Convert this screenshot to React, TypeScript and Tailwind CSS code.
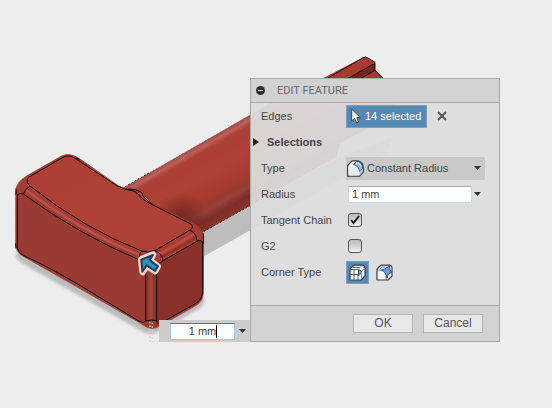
import type { ReactNode } from "react";

function Model() {
  return (
    <svg
      className="absolute left-0 top-0 h-[408px] w-[552px]"
      viewBox="0 0 1656 1224"
      aria-hidden="true"
    >
      <defs>
        <linearGradient id="handle" gradientUnits="userSpaceOnUse" x1="560" y1="454" x2="678" y2="660">
          <stop offset="0" stopColor="#9c4b43" />
          <stop offset="0.05" stopColor="#bd6158" />
          <stop offset="0.11" stopColor="#ab4036" />
          <stop offset="0.4" stopColor="#b04035" />
          <stop offset="0.6" stopColor="#a83a30" />
          <stop offset="0.72" stopColor="#9c3a32" />
          <stop offset="0.78" stopColor="#97413a" />
          <stop offset="0.88" stopColor="#7c2d27" />
          <stop offset="1" stopColor="#8d322a" />
        </linearGradient>
        <linearGradient id="top" x1="0" y1="0" x2="1" y2="1">
          <stop offset="0" stopColor="#ac3f35" />
          <stop offset="1" stopColor="#b04136" />
        </linearGradient>
        <linearGradient id="edge" x1="0" y1="0" x2="1" y2="0">
          <stop offset="0" stopColor="#85302a" />
          <stop offset="0.45" stopColor="#a5443b" />
          <stop offset="1" stopColor="#7d2c26" />
        </linearGradient>
        <radialGradient id="joint" gradientUnits="userSpaceOnUse" cx="545" cy="655" r="80">
          <stop offset="0" stopColor="#5e1f1a" stopOpacity="0.7" />
          <stop offset="1" stopColor="#5e1f1a" stopOpacity="0" />
        </radialGradient>
        <filter id="soft">
          <feGaussianBlur stdDeviation="5" />
        </filter>
      </defs>

      <path d="M608 696 L1000 480 L1180 410 L1160 460 L612 769 Z" fill="#bdbdbd" />
      <path
        d="M45 765 Q50 782 80 798 L430 996 Q455 1008 482 992 L600 925 Q614 912 614 895 L450 900 L80 740 Z"
        fill="#bcbcbc"
        filter="url(#soft)"
      />

      <path d="M920 260 L1080 177 Q1095 167 1102 174 L1125 187 L1125 211 L1150 235 L1190 340 L1000 440 Z" fill="#a83a30" />
      <path d="M1040 235 L1125 188 L1125 211 L1080 235 Z" fill="#74271f" />
      <path
        d="M985 233 L1088 174 Q1097 168 1104 174 L1125 187 L1125 211 L1150 235 M1045 235 L1125 190 M1083 235 L1125 211"
        fill="none" stroke="#171010" strokeWidth="3"
      />
      <path d="M370 563 L915 250 Q1060 300 1010 470 L610 696 L450 700 Z" fill="url(#handle)" />
      <path d="M370 563 L750 346 L750 617 L610 696 L450 700 Z" fill="url(#joint)" />
      <path d="M375 560 L450 517 M612 694 L750 617" fill="none" stroke="#241311" strokeWidth="3" strokeDasharray="5 6" />
      <path d="M450 517 L750 346" fill="none" stroke="#7d5a56" strokeWidth="2" strokeDasharray="4 6" />

      <g transform="translate(0 420)" strokeLinejoin="round">
        <path
          d="M47 155 Q48 126 80 108 L183 49 Q207 35 237 55 L355 137 Q370 146 400 147 Q424 151 455 190 L580 250 Q611 265 611 292 L610 460 Q609 483 590 495 L480 558 Q452 576 422 550 L72 350 Q47 337 47 315 Z"
          fill="#a63c33" stroke="#8a3a32" strokeWidth="2"
        />
        <path
          d="M85 112 L187 53 Q205 42 226 55 L350 137 Q372 149 405 154 Q430 180 445 188 L572 252 Q584 261 570 270 L465 332 Q445 338 425 333 Q250 265 90 138 Q76 126 85 112 Z"
          fill="url(#top)"
        />
        <path d="M79 151 Q250 277 421 346" fill="none" stroke="#bc5248" strokeWidth="7" />
        <path d="M74 157 Q250 292 421 353" fill="none" stroke="#963a32" strokeWidth="3" />
        <path d="M474 345 L584 282" stroke="#bb4a3e" strokeWidth="8" />
        <path d="M480 354 L590 292" stroke="#8b3029" strokeWidth="5" />
        <path
          d="M52 165 Q58 157 70 162 Q235 283 425 363 Q437 369 437 382 L437 543 Q431 551 420 545 L300 473 Q180 397 72 347 Q52 338 52 318 Z"
          fill="#993b34"
        />
        <path
          d="M470 382 Q472 370 489 362 L594 302 Q608 299 608 312 L608 460 Q605 480 590 489 L479 551 Q470 552 470 543 Z"
          fill="#883029"
        />
        <path d="M438 370 L470 370 L470 543 L438 543 Z" fill="url(#edge)" />
        <path d="M426 550 Q452 537 477 554 Q452 574 426 550 Z" fill="#a1352c" />
        <path d="M418 157 Q436 178 455 190" fill="none" stroke="#a8635c" strokeWidth="5" />
        <g fill="none" stroke="#0f0909" strokeWidth="3">
          <path d="M85 112 L187 53 Q205 42 226 55 L350 137 Q372 149 405 154 Q430 180 445 188 L572 252 Q584 261 570 270 L465 332 Q445 338 425 333 Q250 265 90 138 Q76 126 85 112 Z" />
          <path d="M52 165 Q58 157 70 162 Q235 283 425 363 Q437 369 437 382 L437 543 Q431 551 420 545 L300 473 Q180 397 72 347 Q52 338 52 318 Z" />
          <path d="M470 382 Q472 370 489 362 L594 302 Q608 299 608 312 L608 460 Q605 480 590 489 L479 551 Q470 552 470 543 Z" />
          <path d="M70 162 Q74 148 90 138 M425 333 Q414 345 423 362 M465 332 Q487 340 489 362 M570 270 Q588 279 591 302 M438 543 Q454 537 470 543 M48 145 L48 165 M47 310 L48 325 M610 280 L610 312 M228 54 L238 58 M385 147 Q408 146 424 157 Q433 180 457 191" />
        </g>
        <path
          d="M428 396 L424 358 L459 344 L449 361 L473 379 L465 393 L440 376 Z"
          fill="#f0d4d1" stroke="#f0d4d1" strokeWidth="20"
        />
        <path
          d="M427 395 L424 359 L459 345 L449 360 L474 379 L465 393 L440 376 Z"
          fill="#2b8dbf" stroke="#26404f" strokeWidth="6"
        />
        <path d="M431 383 L429 363 L449 354 L441 363 L467 382 L464 386 L438 367 Z" fill="#2f93c5" />
        <path d="M450 545 L450 606 M457 548 L457 606" stroke="#d8cfce" strokeWidth="4" strokeDasharray="5 6" />
      </g>
    </svg>
  );
}

function Caret({ className = "" }: { className?: string }) {
  return (
    <svg className={`h-1 w-[7px] ${className}`} viewBox="0 0 7 4" aria-hidden="true">
      <path d="M0 0h7L3.500 4z" fill="#333" />
    </svg>
  );
}

function FilletIcon() {
  return (
    <svg className="pointer-events-none absolute left-px top-[3px] size-[17px]" viewBox="0 0 17 17" aria-hidden="true">
      <path d="M.7 5.500 5 .8H10.500Q16.300 2 16.300 8V12L12.500 16.200H.7Z" fill="#f7f9fb" stroke="#34373b" strokeWidth="1.200" strokeLinejoin="round" />
      <path d="M6.500 4.600 9.500 1.400Q15.500 2.500 15.700 8.500L12.500 11.500Q12 6 6.500 4.600Z" fill="#8fb6e4" stroke="#2c4c7c" strokeWidth=".9" />
      <path d="M9 4.200 11 2.600Q13.500 4 14 6.500" fill="none" stroke="#d3e5f8" strokeWidth="1.200" />
      <path d="M12.600 11.500V15.800L15.700 12V9Z" fill="#b7c6d8" />
      <path d="M1.500 6.200 6 5Q11.500 6.500 11.800 11.500V15.400H1.500Z" fill="#e6ebf2" />
    </svg>
  );
}

function CornerIcon({ setback = false }: { setback?: boolean }) {
  return (
    <svg className="size-[17px]" viewBox="0 0 17 17" aria-hidden="true">
      <path
        d="M1 6Q1 4.500 2.500 3.500L5 1.200H13Q16 1.200 16 4.500V12L12 16H1Z"
        fill="#f4f5f6" stroke="#3c4046" strokeWidth="1.200" strokeLinejoin="round"
      />
      {setback ? (
        <>
          <path d="M1.500 6H6M10 12V16M4 4.500 6.500 3H9" fill="none" stroke="#656b72" />
          <path
            d="M5.500 6Q9.500 5.500 13.500 1.500 13 5.500 15.500 8.500 12 9 11 14 9.500 7.500 5.500 6Z"
            fill="#7199d2" stroke="#244c8d" strokeLinejoin="round"
          />
        </>
      ) : (
        <>
          <path d="M1.500 5.500H9M9 11V16M5 5.500V15.500M1.500 10.500H9M4 3.500H11" fill="none" stroke="#5c6269" />
          <path d="M9 5.500 12.500 2 15.500 4.500 12.500 7.500Z" fill="#fff" stroke="#7b858f" strokeWidth=".8" />
          <path d="M9.500 5.500Q12 6 12.500 9L9.500 11.500Z" fill="#7fa5dc" stroke="#244c8d" />
          <path d="M12.500 8V15" stroke="#8b9299" />
        </>
      )}
    </svg>
  );
}

function Row({ label, htmlFor, children }: { label: string; htmlFor: string; children: ReactNode }) {
  return (
    <div className="flex h-[26px] items-center pl-[10px] pr-[14px]">
      <label htmlFor={htmlFor} className="w-[85px] shrink-0">{label}</label>
      {children}
    </div>
  );
}

function Check({ id, checked = false }: { id: string; checked?: boolean }) {
  return (
    <span className="relative ml-[2px] size-[14px]">
      <input
        id={id}
        type="checkbox"
        defaultChecked={checked}
        className="peer block size-[14px] appearance-none rounded-[3px] border border-[#55585a] bg-linear-to-b from-[#b8b8b8] to-[#f0f0f0]"
      />
      <svg className="pointer-events-none absolute inset-0 hidden size-[14px] peer-checked:block" viewBox="0 0 14 14" aria-hidden="true">
        <path d="M3 7 5.500 10 11 3" fill="none" stroke="#111" strokeWidth="1.800" />
      </svg>
    </span>
  );
}

function EditFeature() {
  return (
    <section
      aria-label="Edit feature"
      className="absolute left-[250px] top-[78px] w-[250px] border border-[#a9a9a9] bg-[#dddddd]/94 text-[11px] leading-[14px] text-[#444]"
    >
      <header className="flex h-6 items-center gap-3 border-b border-[#a9a9a9] bg-[#d2d2d2] pl-[5px]">
        <button aria-label="Collapse" className="flex size-[9px] items-center justify-center rounded-full bg-[#303030]">
          <span className="h-px w-[5px] bg-[#ddd]" />
        </button>
        <h1 className="font-['Roboto',sans-serif] text-[#666]">EDIT FEATURE</h1>
      </header>

      <div className="pb-5">
        <Row label="Edges" htmlFor="edges">
          <button id="edges" className="flex h-[23px] w-[81px] items-center gap-1 border border-[#76a0c6] bg-[#5688b4] pl-1 text-white">
            <svg className="h-4 w-[10px]" viewBox="0 0 10 16" aria-hidden="true">
              <path d="M.7 1V13L3.500 10.500 5.500 15 7.800 14 5.900 9.600H9.400Z" fill="#f5f5f5" stroke="#3b434b" />
            </svg>
            <span className="whitespace-nowrap">14 selected</span>
          </button>
          <button aria-label="Clear selection" className="ml-[10px]">
            <svg className="size-[10px]" viewBox="0 0 10 10" aria-hidden="true">
              <path d="M1 1 9 9M9 1 1 9" stroke="#555" strokeWidth="2" />
            </svg>
          </button>
        </Row>
        <button className="flex h-[26px] items-center gap-2 pl-[2px] font-bold">
          <svg className="h-2 w-[6px]" viewBox="0 0 6 8" aria-hidden="true">
            <path d="M0 0 6 4 0 8Z" fill="#222" />
          </svg>
          Selections
        </button>
        <Row label="Type" htmlFor="type">
          <div className="relative flex-1">
            <select id="type" className="block h-[23px] w-full appearance-none bg-[#c9c9c9] pl-[21px]">
              <option>Constant Radius</option>
            </select>
            <FilletIcon />
            <Caret className="pointer-events-none absolute right-1 top-[9px]" />
          </div>
        </Row>
        <Row label="Radius" htmlFor="radius">
          <input
            id="radius"
            defaultValue="1 mm"
            className="ml-[2px] h-[17px] min-w-0 flex-1 border border-[#c9dbe9] border-t-[#a8a8a8] bg-white pl-[3px]"
          />
          <button aria-label="Radius options" className="ml-[2px] mr-1"><Caret /></button>
        </Row>
        <Row label="Tangent Chain" htmlFor="chain"><Check id="chain" checked /></Row>
        <Row label="G2" htmlFor="g2"><Check id="g2" /></Row>
        <Row label="Corner Type" htmlFor="corner">
          <button id="corner" aria-label="Rolling ball" className="flex size-[23px] items-center justify-center border border-[#76a0c6] bg-[#5688b4]">
            <CornerIcon />
          </button>
          <button aria-label="Setback" className="ml-1 flex size-[23px] items-center justify-center">
            <CornerIcon setback />
          </button>
        </Row>
      </div>

      <footer className="flex h-9 items-center justify-end gap-[10px] border-t border-[#a9a9a9] bg-[#d2d2d2] pr-4 text-xs text-[#555]">
        <button className="h-[19px] w-[60px] border border-[#b4b4b4] bg-[#e8e8e8] leading-[17px]">OK</button>
        <button className="h-[19px] w-[60px] border border-[#b4b4b4] bg-[#e8e8e8] leading-[17px]">Cancel</button>
      </footer>
    </section>
  );
}

function ValueInput() {
  return (
    <div className="absolute left-[159px] top-[320px] flex h-[22px] w-[91px] items-center bg-[#cccccc] pl-[11px] text-[11px] text-[#444]">
      <div className="relative w-[65px]">
        <input
          aria-label="Radius value"
          defaultValue="1 mm"
          className="block h-[17px] w-full border border-[#9dc9e8] border-t-[#3e7cb0] bg-white text-center"
        />
        <span className="absolute right-[18px] top-[2px] h-[13px] w-px bg-black" />
      </div>
      <button aria-label="Value options" className="ml-1"><Caret /></button>
    </div>
  );
}

export default function App() {
  return (
    <main className="relative min-h-screen overflow-hidden bg-[#ededed] font-['Liberation_Sans',Arial,sans-serif]">
      <Model />
      <EditFeature />
      <ValueInput />
    </main>
  );
}
